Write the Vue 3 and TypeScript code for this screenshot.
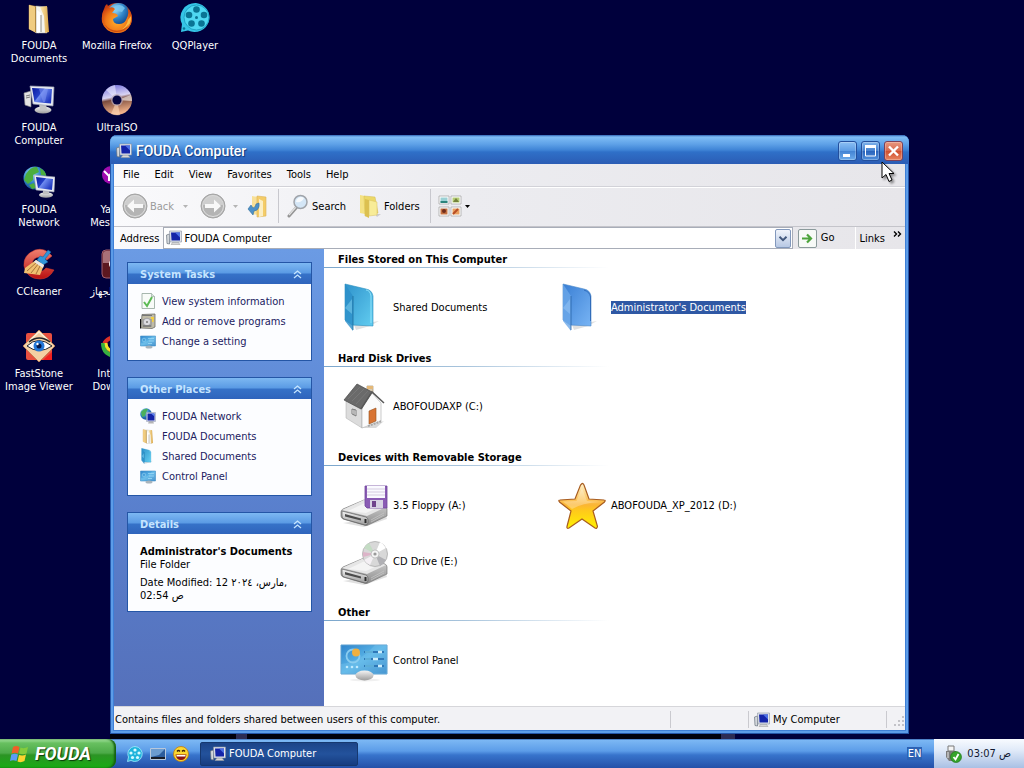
<script setup lang="ts">
import { ref } from 'vue'

interface DesktopItem { icon: string; lines: string[]; col: number; row: number }
interface LinkItem { icon: string; text: string }
interface DriveItem { icon: string; text: string; selected?: boolean }
interface Section { title: string; items: DriveItem[] }

const desktopItems: DesktopItem[] = [
  { icon: 'docs', lines: ['FOUDA', 'Documents'], col: 1, row: 1 },
  { icon: 'firefox', lines: ['Mozilla Firefox'], col: 2, row: 1 },
  { icon: 'reel', lines: ['QQPlayer'], col: 3, row: 1 },
  { icon: 'computer', lines: ['FOUDA', 'Computer'], col: 1, row: 2 },
  { icon: 'disc', lines: ['UltraISO'], col: 2, row: 2 },
  { icon: 'network', lines: ['FOUDA', 'Network'], col: 1, row: 3 },
  { icon: 'yahoo', lines: ['Yahoo!', 'Messenger'], col: 2, row: 3 },
  { icon: 'ccleaner', lines: ['CCleaner'], col: 1, row: 4 },
  { icon: 'device', lines: ['تعريف الجهاز'], col: 2, row: 4 },
  { icon: 'eye', lines: ['FastStone', 'Image Viewer'], col: 1, row: 5 },
  { icon: 'idm', lines: ['Internet', 'Download'], col: 2, row: 5 },
]

const menus: string[] = ['File', 'Edit', 'View', 'Favorites', 'Tools', 'Help']

const tasks: LinkItem[] = [
  { icon: 'sheet', text: 'View system information' },
  { icon: 'programs', text: 'Add or remove programs' },
  { icon: 'panelsmall', text: 'Change a setting' },
]

const places: LinkItem[] = [
  { icon: 'netsmall', text: 'FOUDA Network' },
  { icon: 'docs', text: 'FOUDA Documents' },
  { icon: 'shared', text: 'Shared Documents' },
  { icon: 'panelsmall', text: 'Control Panel' },
]

const sections: Section[] = [
  {
    title: 'Files Stored on This Computer',
    items: [
      { icon: 'shared', text: 'Shared Documents' },
      { icon: 'admin', text: "Administrator's Documents", selected: true },
    ],
  },
  { title: 'Hard Disk Drives', items: [{ icon: 'house', text: 'ABOFOUDAXP (C:)' }] },
  {
    title: 'Devices with Removable Storage',
    items: [
      { icon: 'floppy', text: '3.5 Floppy (A:)' },
      { icon: 'star', text: 'ABOFOUDA_XP_2012 (D:)' },
      { icon: 'cd', text: 'CD Drive (E:)' },
    ],
  },
  { title: 'Other', items: [{ icon: 'panel', text: 'Control Panel' }] },
]

const address = ref('FOUDA Computer')
</script>

<template>
  <div class="screen">
    <svg class="defs" aria-hidden="true">
      <defs>
        <linearGradient id="g-screen" x1="0" y1="0" x2="1" y2="0.6"><stop offset="0" stop-color="#0a1a9c" /><stop offset="0.45" stop-color="#2440c8" /><stop offset="0.5" stop-color="#6f8cf0" /><stop offset="1" stop-color="#2038c0" /></linearGradient>
        <linearGradient id="g-grey" x1="0" y1="0" x2="0" y2="1"><stop offset="0" stop-color="#f4f4f4" /><stop offset="1" stop-color="#9c9c9c" /></linearGradient>
        <linearGradient id="g-side" x1="0" y1="0" x2="0" y2="1"><stop offset="0" stop-color="#d8d8d8" /><stop offset="1" stop-color="#8c8c8c" /></linearGradient>
        <linearGradient id="g-manila" x1="0" y1="0" x2="1" y2="0"><stop offset="0" stop-color="#fbe9b4" /><stop offset="1" stop-color="#dda94a" /></linearGradient>
        <linearGradient id="g-cyan" x1="0" y1="0" x2="1" y2="1"><stop offset="0" stop-color="#2f93cc" /><stop offset="1" stop-color="#62cdf0" /></linearGradient>
        <linearGradient id="g-blue" x1="0" y1="0" x2="1" y2="1"><stop offset="0" stop-color="#3a7fd4" /><stop offset="1" stop-color="#78b4f4" /></linearGradient>
        <linearGradient id="g-star" x1="0" y1="0" x2="0" y2="1"><stop offset="0" stop-color="#fff3cf" /><stop offset="0.48" stop-color="#fbb534" /><stop offset="0.6" stop-color="#ffc81c" /><stop offset="1" stop-color="#fff200" /></linearGradient>
        <linearGradient id="g-panel" x1="0" y1="0" x2="1" y2="1"><stop offset="0" stop-color="#2f84cc" /><stop offset="0.5" stop-color="#5ab4e6" /><stop offset="1" stop-color="#2f80c4" /></linearGradient>
        <linearGradient id="g-disc" x1="0" y1="0" x2="0.2" y2="1"><stop offset="0" stop-color="#6a66d8" /><stop offset="0.45" stop-color="#d8d4f4" /><stop offset="0.55" stop-color="#7a4a3c" /><stop offset="1" stop-color="#f0b088" /></linearGradient>
        <radialGradient id="g-globe" cx="0.35" cy="0.3" r="0.8"><stop offset="0" stop-color="#9fe0f8" /><stop offset="0.5" stop-color="#2f84c8" /><stop offset="1" stop-color="#0c3a80" /></radialGradient>
        <radialGradient id="g-fox" cx="0.5" cy="0.6" r="0.6"><stop offset="0" stop-color="#ffb02c" /><stop offset="0.6" stop-color="#f07818" /><stop offset="1" stop-color="#c83c10" /></radialGradient>
        <linearGradient id="g-red" x1="0" y1="0" x2="0" y2="1"><stop offset="0" stop-color="#f08070" /><stop offset="1" stop-color="#b81010" /></linearGradient>
      </defs>

      <symbol id="i-docs" viewBox="0 0 32 32">
        <path d="M6 3 16 5V31L6 27Z" fill="url(#g-manila)" stroke="#b98a3c" stroke-width=".5" />
        <path d="M13 4 24 5V31L13 31Z" fill="#f4f4ee" stroke="#a8a8a0" stroke-width=".5" />
        <path d="M17 5 24 4 26 30 22 31 21 14Z" fill="url(#g-manila)" />
        <path d="M14 8 18 11V30L14 31Z" fill="#fff" /><path d="M18 13v17" stroke="#8c8c84" />
        <path d="M6 3 12 5 13 31 6 27Z" fill="#f0cc80" /><path d="M12.500 5v25" stroke="#a37a34" stroke-width=".8" />
      </symbol>

      <symbol id="i-firefox" viewBox="0 0 32 32">
        <circle cx="16" cy="16" r="15" fill="url(#g-fox)" />
        <circle cx="17.500" cy="12" r="11" fill="url(#g-globe)" />
        <path d="M14 4q6-3 10 2l-3 4-5-1-3 3z" fill="#7cc8f0" opacity=".8" />
        <path d="M3 7Q4 3 6 2L8 6Q12 4 14 7L11 11Q16 11 17 14L12 17Q12 22 18 22 23 22 25 18 29 11 26 6 33 13 30 22 25 32 15 31 4 30 1 20 0 12 3 7Z" fill="url(#g-fox)" />
        <path d="M30 14Q31 25 20 28 26 24 27 18Z" fill="#ffd050" opacity=".8" />
        <path d="M2 14Q2 23 9 27 20 32 28 22 24 31 14 30 3 28 2 14Z" fill="#c03c0c" opacity=".7" />
      </symbol>

      <symbol id="i-reel" viewBox="0 0 32 32">
        <path d="M17 1A15 14.500 0 1 1 9 28.500L2 30 3 22A15 14.500 0 0 1 17 1Z" fill="#35c4e6" />
        <circle cx="17.500" cy="15.500" r="12.500" fill="#4fd8f2" stroke="#1898bc" stroke-width=".8" />
        <g fill="#0a7494"><circle cx="17.500" cy="7.500" r="3.300" /><circle cx="25" cy="13" r="3.300" /><circle cx="22.500" cy="21.500" r="3.300" /><circle cx="12.500" cy="21.500" r="3.300" /><circle cx="10" cy="13" r="3.300" /><circle cx="17.500" cy="15.500" r="1.500" /><circle cx="5" cy="26.500" r="1.300" /></g>
      </symbol>

      <symbol id="i-computer" viewBox="0 0 32 32">
        <path d="M1 9 8 7V23L2 21Z" fill="#e4e4e4" stroke="#8c8c8c" stroke-width=".6" /><path d="M3 12l4-1M3 14l4-1" stroke="#777" />
        <ellipse cx="20" cy="26" rx="8.500" ry="3.500" fill="url(#g-grey)" /><path d="M16 20h7l1 6h-7z" fill="#c4c4c4" />
        <path d="M7 2 31 3 30 22 10 20Z" fill="#e8ebf2" stroke="#9a9fb0" stroke-width=".7" />
        <path d="M9 4 29 5 28 19.500 11.500 18Z" fill="url(#g-screen)" /><path d="M16 5 25 5 22 18 20 18Z" fill="#8298f4" opacity=".55" />
      </symbol>

      <symbol id="i-network" viewBox="0 0 32 32">
        <circle cx="12" cy="12" r="11.500" fill="url(#g-globe)" />
        <path d="M3 8Q8 0 14 1L16 6 10 9 10 14 5 18 1 14ZM17 2Q23 5 23 10L18 9ZM6 19 11 17 13 22 9 23Z" fill="#4cae3e" />
        <ellipse cx="23" cy="29" rx="7" ry="2.800" fill="url(#g-grey)" /><path d="M20 23h6v5h-6z" fill="#c0c0c0" />
        <path d="M11 9 32 11 31 26 13 24Z" fill="#e8ebf2" stroke="#9a9fb0" stroke-width=".6" /><path d="M13 11 30 13 29 24 15 22Z" fill="url(#g-screen)" />
      </symbol>

      <symbol id="i-netsmall" viewBox="0 0 16 16">
        <circle cx="6" cy="6" r="5.800" fill="url(#g-globe)" /><path d="M1 4Q4 0 8 1L6 5 5 8 2 9Z" fill="#4cb05c" />
        <path d="M9 13h4l1 2.500H8z" fill="#b4b4b4" /><path d="M6.500 4.500H15.500V13.500H6.500Z" fill="#dfe4f0" stroke="#8890a8" stroke-width=".5" /><path d="M7.500 5.500h7v7h-7z" fill="#1424a8" /><path d="M11 5.500h3.500v3z" fill="#5c84f0" />
      </symbol>

      <symbol id="i-disc" viewBox="0 0 32 32">
        <circle cx="16" cy="16" r="15" fill="url(#g-disc)" />
        <path d="M16 16 5 6A15 15 0 0 1 14 1Z" fill="#f0f0ff" opacity=".55" /><path d="M16 16 30 11A15 15 0 0 1 31 17Z" fill="#fff" opacity=".6" /><path d="M16 16 19 31A15 15 0 0 1 10 30Z" fill="#ffd8b8" opacity=".6" />
        <circle cx="16" cy="16" r="6" fill="#b9a8b8" opacity=".7" /><circle cx="16" cy="16" r="4.500" fill="#040440" />
      </symbol>

      <symbol id="i-yahoo" viewBox="0 0 32 32">
        <circle cx="10" cy="9" r="9" fill="#a00cb0" /><path d="M3 5l5 5v5m5-11-5 6" fill="none" stroke="#fff" stroke-width="2" /><circle cx="22" cy="22" r="8" fill="#f8d020" />
      </symbol>

      <symbol id="i-ccleaner" viewBox="0 0 32 32">
        <path d="M29 8Q22-1 12 2 0 7 1 18 4 31 17 31 26 31 31 22L23 20Q19 25 14 23 9 21 9 16 10 9 17 9L24 12Z" fill="url(#g-red)" stroke="#e04030" stroke-width=".5" />
        <path d="M25 2 28 4 22 11 25 14 20 17 14 12 17 8 20 9Z" fill="#2f94d8" stroke="#0d5c9c" stroke-width=".5" />
        <path d="M13 12 21 17 17 27 1 25 2 20Z" fill="#f0c070" /><path d="M14 14 4 23M16 15 8 25M18 16 13 26" stroke="#94602c" stroke-width=".8" /><path d="M13 12l8 5-1 3-9-6z" fill="#e8e8e8" />
      </symbol>

      <symbol id="i-device" viewBox="0 0 32 32">
        <rect x="1" y="2" width="30" height="28" rx="4" fill="#5c1820" stroke="#a06070" /><path d="M2 6q0-3 3-3h22q3 0 3 3v9H2z" fill="#a87078" /><circle cx="14" cy="16" r="6" fill="#fff" />
      </symbol>

      <symbol id="i-eye" viewBox="0 0 32 32">
        <rect x="3" y="3" width="26" height="27" rx="2" fill="#e85040" /><path d="M29 22V30H20Z" fill="#f02020" />
        <path d="M16 0 32 16 16 32 0 16Z" fill="#f4d0a4" stroke="#c08050" stroke-width=".8" /><path d="M7 10 16 2 25 10" fill="none" stroke="#fff0d8" stroke-width="1.500" />
        <path d="M4 16Q15 5 29 16 16 25 4 16Z" fill="#fff" stroke="#20242c" /><path d="M6 12Q16 4 27 12" fill="none" stroke="#20242c" stroke-width="1.300" />
        <circle cx="16" cy="16" r="5.500" fill="#2478d8" /><circle cx="16" cy="16" r="2.500" fill="#041848" /><circle cx="14.500" cy="14" r="1.200" fill="#fff" />
      </symbol>

      <symbol id="i-idm" viewBox="0 0 32 32">
        <ellipse cx="15" cy="16" rx="12" ry="9" fill="none" stroke="#dc3028" stroke-width="4" /><path d="M2 13q0 12 13 13" fill="none" stroke="#38b040" stroke-width="4" /><path d="M5 13q0 8 10 9" fill="none" stroke="#f4e428" stroke-width="3" />
      </symbol>

      <symbol id="i-sheet" viewBox="0 0 16 16">
        <path d="M2 .5H11.500L14.500 3.500V15.500H2Z" fill="#f8fbf8" stroke="#92a49a" stroke-width=".8" /><path d="M11.500.5V3.500H14.500" fill="#d8e4dc" stroke="#92a49a" stroke-width=".6" /><path d="M4 9 7 13 12 4" fill="none" stroke="#5cba54" stroke-width="2" />
      </symbol>

      <symbol id="i-programs" viewBox="0 0 16 16">
        <path d="M2 1.500 15 1V14L12 15.500 1 15Z" fill="#c0bca8" stroke="#6c6c68" stroke-width=".8" /><path d="M.5 6V15.500" stroke="#111" /><path d="M2 2.500 12 2.500" stroke="#777" /><path d="M11 4 14 4 13.500 9 11 9Z" fill="#f4d040" /><path d="M2 6h10v8H2z" fill="#a4a49c" /><circle cx="7" cy="9" r="3.800" fill="#dcdce0" stroke="#8c8c94" stroke-width=".7" /><circle cx="7" cy="9" r="1" fill="#777" /><path d="M3 13h8" stroke="#606060" />
      </symbol>

      <symbol id="i-panelsmall" viewBox="0 0 16 16">
        <path d="M.5 3H15.500V13H.5Z" fill="url(#g-panel)" stroke="#4a93c8" stroke-width=".6" /><path d="M8 5.500h6M9 8h5M8 10.500h4" stroke="#8cd0f4" stroke-width=".9" /><circle cx="4" cy="7" r="1.800" fill="none" stroke="#84c8ec" stroke-width=".8" /><path d="M1 10Q8 9 12 3.500H15V12.500H1Z" fill="#b4e4fa" opacity=".2" /><ellipse cx="9" cy="14" rx="3.500" ry="1.500" fill="#a8b4bc" />
      </symbol>

      <symbol id="i-panel" viewBox="0 0 48 48">
        <ellipse cx="25" cy="44" rx="15" ry="1.500" fill="#000" opacity=".06" />
        <path d="M1 9H47V38H1Z" fill="url(#g-panel)" stroke="#5a9fd0" /><path d="M1 28Q20 26 35 9H47V38H1Z" fill="#8ad0f4" opacity=".28" />
        <circle cx="13" cy="20" r="6.500" fill="none" stroke="#8acdf0" stroke-width="1.800" /><circle cx="16" cy="16.500" r="4" fill="#f0b040" />
        <path d="M24 16h20M24 23h20M24 30h20" stroke="#2f78b8" stroke-width="2" /><path d="M38 16h4M33 23h5M38 30h4" stroke="#cceefc" stroke-width="2.500" /><path d="M25 16h8M25 23h6M25 30h9" stroke="#8ce4f8" />
        <g fill="#bfeaff"><circle cx="7" cy="31" r="1.300" /><circle cx="12" cy="31" r="1.300" /><circle cx="17" cy="31" r="1.300" /></g>
        <ellipse cx="24.500" cy="39.500" rx="9" ry="5" fill="url(#g-grey)" />
      </symbol>

      <symbol id="i-shared" viewBox="0 0 48 48">
        <path d="M14 42 39 38 30 43 16 47Z" fill="#000" opacity=".12" /><path d="M5 1 26 6Q32 7 33 13V43L12 42 5 37Z" fill="url(#g-cyan)" stroke="#2a8fbe" stroke-width=".6" /><path d="M5 1 13 13V48L5 38Z" fill="#2c8fc8" opacity=".8" /><path d="M13 13V47" stroke="#1c6c9c" stroke-width=".8" /><path d="M5 25 12 31V16Z" fill="#9ce4fa" opacity=".4" /><path d="M26 7Q30 7 31 13V40" fill="none" stroke="#a0ecff" stroke-width=".8" />
      </symbol>

      <symbol id="i-admin" viewBox="0 0 48 48">
        <path d="M14 42 39 38 30 43 16 47Z" fill="#000" opacity=".12" /><path d="M5 1 26 6Q32 7 33 13V43L12 42 5 37Z" fill="url(#g-blue)" stroke="#4c88c8" stroke-width=".6" /><path d="M5 1 13 13V48L5 38Z" fill="#6ca8e8" opacity=".8" /><path d="M13 13V47" stroke="#2a64a8" stroke-width=".8" /><path d="M5 25 12 31V16Z" fill="#a8d0fa" opacity=".4" /><path d="M26 7Q32 9 32.500 14V38" fill="none" stroke="#2460b0" stroke-width=".8" />
      </symbol>

      <symbol id="i-house" viewBox="0 0 48 48">
        <path d="M22 46 44 39 36 46Z" fill="#000" opacity=".15" />
        <path d="M27 4h6v9l-6-3z" fill="#d8cbb4" stroke="#948468" stroke-width=".6" /><path d="M27 4h6v3h-6z" fill="#e4b878" />
        <path d="M6 19 22 24V46L6 36Z" fill="#dcdcdc" stroke="#aaa" stroke-width=".5" /><path d="M22 24 32 11 41 21V39L22 46Z" fill="#fbfbfb" stroke="#aaa" stroke-width=".6" />
        <path d="M17 2 32 10 21 27 4 18Z" fill="#6a6a6a" stroke="#484848" stroke-width=".7" /><path d="M21 27 32 10 44 21" fill="none" stroke="#585858" stroke-width="1.500" /><path d="M8 17 20 5M12 19 24 7M16 22 28 9" stroke="#808080" stroke-width=".6" />
        <path d="M29 29 36 26V39L29 42Z" fill="#d87434" stroke="#94501c" stroke-width=".6" /><path d="M12 27 16 28V34L12 32ZM14 27.500V33" fill="#eee" stroke="#666" stroke-width=".8" /><path d="M28 44 42 39" stroke="#a8a8a8" stroke-width="2" stroke-dasharray="2 1" />
      </symbol>

      <symbol id="i-drive" viewBox="0 0 48 48">
        <path d="M3 42 24 46 47 38 46 35Z" fill="#000" opacity=".12" />
        <path d="M1 31Q1 29 3 28L24 19 45 25Q47 26 47 28V35L28 44Q26 45 24 44L3 38Q1 37 1 35Z" fill="url(#g-side)" stroke="#787878" stroke-width=".7" />
        <path d="M2 29 24 19 46 26 27 35Z" fill="#e6e6e6" />
        <path d="M8 30 25 22 39 26 26 32Z" fill="#f4f4f4" />
        <path d="M2 30 26 36Q28 37 28 39V42Q28 44 25 44L4 38Q2 37 2 35Z" fill="url(#g-grey)" stroke="#606060" stroke-width=".7" />
        <path d="M5 33 21 37.500V39.500L5 35.500Z" fill="#4c4c4c" /><path d="M25.500 38v4" stroke="#2c2c2c" stroke-width="2" /><path d="M31 39 44 32M31 41 44 34" stroke="#c4c4c4" stroke-width=".8" />
      </symbol>
      <symbol id="i-floppy" viewBox="0 0 48 48">
        <use href="#i-drive" /><path d="M25 5H47V27H27L25 25Z" fill="#8a5cb4" stroke="#70449c" stroke-width=".8" /><path d="M27 5H45V17H27Z" fill="#fafaff" /><path d="M27 8h18M27 11h18M27 14h18" stroke="#ccc0d8" stroke-width=".8" /><path d="M30 19H43V27H30Z" fill="#d8d4e4" /><path d="M32 20h4v6h-4z" fill="#70448c" />
      </symbol>
      <symbol id="i-cd" viewBox="0 0 48 48">
        <use href="#i-drive" y="2" /><circle cx="35" cy="17" r="12.500" fill="#d8d8d8" stroke="#a4a4a4" stroke-width=".7" /><path d="M35 17 24 11A13 13 0 0 1 29 6Z" fill="#c4dcc4" /><path d="M35 17 40 5A13 13 0 0 1 46 11Z" fill="#fff" /><path d="M35 17 46 23A13 13 0 0 1 40 29Z" fill="#b0b0b4" /><path d="M35 17 24 23A13 13 0 0 0 30 28Z" fill="#f4f0f4" /><path d="M35 17 23 15V20Z" fill="#dcb4c8" /><circle cx="35" cy="17" r="4" fill="#f4f4f4" stroke="#aaa" stroke-width=".6" /><circle cx="35" cy="17" r="1.600" fill="#999" />
      </symbol>
      <symbol id="i-star" viewBox="0 0 48 48">
        <path d="M24 2.500Q25 2 26 4L31 18 46 19Q48 19 46.500 21L35 30 39.500 45.500Q39 48 37 47L24 38 11 47Q8.500 48 9 45.500L13 30 1.500 21Q0 19 2 19L17 18 22.500 4Z" fill="url(#g-star)" stroke="#a85c20" stroke-width="1.200" /><path d="M5 20.500 18.500 20 24 7 29 20 42 21Q24 22 14 28Z" fill="#fff" opacity=".28" />
      </symbol>

      <symbol id="i-mini" viewBox="0 0 16 16">
        <path d="M.5 5 3.500 4V14L1 13.500Z" fill="#d4d8dc" stroke="#69737e" stroke-width=".7" /><path d="M7 12h5l2 2.500H5z" fill="#d8d8d8" stroke="#999" stroke-width=".5" /><path d="M3.500 1 15.500 1V12L4 12Z" fill="#e0e4ec" stroke="#8890a0" stroke-width=".6" /><path d="M5 2.500 14 2.500V10.500H5.500Z" fill="#1424a8" /><path d="M9 2.500h5v5z" fill="#4c70e4" />
      </symbol>
    </svg>

    <main class="desktop">
      <div class="icons">
        <button v-for="d in desktopItems" :key="d.lines[0] + d.row" class="shortcut" :class="['c' + d.col, 'r' + d.row]">
          <svg class="i32"><use :href="'#i-' + d.icon" /></svg>
          <span v-for="l in d.lines" :key="l" class="line">{{ l }}</span>
        </button>
      </div>
      <div class="dock"></div>

      <section class="window" aria-label="FOUDA Computer">
        <header class="titlebar">
          <svg class="i16"><use href="#i-mini" /></svg>
          <h1>FOUDA Computer</h1>
          <button class="wbtn min" aria-label="Minimize"><svg viewBox="0 0 19 20"><path d="M5 14.500h7" stroke="#fff" stroke-width="3" /></svg></button>
          <button class="wbtn" aria-label="Maximize"><svg viewBox="0 0 19 20"><path d="M4.500 5h10v10h-10z" fill="none" stroke="#fff" /><path d="M4 5.500h11" stroke="#fff" stroke-width="3" /></svg></button>
          <button class="wbtn close" aria-label="Close"><svg viewBox="0 0 19 20"><path d="M5 5.500 14 14.500M14 5.500 5 14.500" stroke="#fff" stroke-width="2.400" /></svg></button>
        </header>

        <nav class="menubar"><button v-for="m in menus" :key="m">{{ m }}</button></nav>

        <div class="toolbar">
          <button class="tool dim" disabled>
            <svg class="i26" viewBox="0 0 26 26"><circle cx="13" cy="13" r="12" fill="#b4b4b4" stroke="#a4a4a4" /><circle cx="13" cy="13" r="10.500" fill="none" stroke="#dedede" /><path d="M3 12a10 10 0 0 1 20 0z" fill="#d4d4d4" opacity=".8" /><path d="M5 13 12 6.500V11H21V15H12V19.500Z" fill="#f8f8f8" /></svg>
            Back
          </button>
          <svg class="caret dim" viewBox="0 0 5 3"><path d="M0 0H5L2.500 3Z" /></svg>
          <button class="tool fwd" disabled aria-label="Forward">
            <svg class="i26" viewBox="0 0 26 26"><circle cx="13" cy="13" r="12" fill="#b4b4b4" stroke="#a4a4a4" /><circle cx="13" cy="13" r="10.500" fill="none" stroke="#dedede" /><path d="M3 12a10 10 0 0 1 20 0z" fill="#d4d4d4" opacity=".8" /><path d="M21 13 14 6.500V11H5V15H14V19.500Z" fill="#f8f8f8" /></svg>
          </button>
          <svg class="caret dim near" viewBox="0 0 5 3"><path d="M0 0H5L2.500 3Z" /></svg>
          <button class="tool up" aria-label="Up">
            <svg class="i24" viewBox="0 0 24 24"><path d="M6 2 12 3V21L6 20Z" fill="#f8e098" /><path d="M11 2 20 3V22L11 23Z" fill="#f4cc68" stroke="#dcb458" stroke-width=".6" /><path d="M13 5 17 7V22L13 23Z" fill="#fbeec4" /><path d="M2 15 7 21 8 17Q14 16 13 9L10 10Q10 13 7 14L5 11Z" fill="#4c90c8" stroke="#34709c" stroke-width=".6" /></svg>
          </button>
          <span class="sep"></span>
          <button class="tool">
            <svg class="i24" viewBox="0 0 24 24"><path d="M3 22 10 14" stroke="#949494" stroke-width="3" stroke-linecap="round" /><path d="M3 21 10 13" stroke="#e4e4e4" stroke-width="1.200" /><circle cx="14.500" cy="8" r="6.500" fill="#d4e6f6" stroke="#a0a4aa" stroke-width="1.500" /><path d="M10 8a5 5 0 0 1 8-4q-2 5-8 4z" fill="#fff" opacity=".8" /></svg>
            Search
          </button>
          <button class="tool folders">
            <svg class="i24" viewBox="0 0 24 24"><path d="M17 20h6l-4 3z" fill="#000" opacity=".15" /><path d="M2 1 7 2V20L2 19Z" fill="#f4e284" /><path d="M6 2 17 3 20 19 7 22Z" fill="#ecd868" stroke="#d4bc50" stroke-width=".5" /><path d="M7 5 11 6V24L7 22Z" fill="#dcc050" /><path d="M11 6 19 8V21L11 22Z" fill="#f8ec98" stroke="#d8c060" stroke-width=".5" /></svg>
            Folders
          </button>
          <span class="sep"></span>
          <button class="tool views" aria-label="Views">
            <svg class="i24" viewBox="0 0 24 24"><g fill="#fff" stroke="#aaa" stroke-width=".8"><path d="M1 2h10v8H1zM13 2h10v8H13zM1 13h10v9H1zM13 13h10v9H13z" /></g><path d="M2.500 3.500h7v5h-7z" fill="#9ad0d4" /><path d="M2.500 7h7v2h-7z" fill="#2c847c" /><path d="M14.500 3.500h7v5h-7z" fill="#b4cc74" /><path d="M15 8 18 4 21 8Z" fill="#74823c" /><path d="M2.500 14.500h7v6h-7z" fill="#c47040" /><circle cx="6" cy="17" r="2" fill="#702c1c" /><path d="M14.500 14.500h7v6h-7z" fill="#e8a060" /><path d="M15 20 20 15" stroke="#b84c24" stroke-width="2" /></svg>
            <svg class="caret" viewBox="0 0 5 3"><path d="M0 0H5L2.500 3Z" /></svg>
          </button>
        </div>

        <div class="addressbar">
          <label for="addr">Address</label>
          <div class="field">
            <svg class="i16"><use href="#i-mini" /></svg>
            <input id="addr" v-model="address" type="text" />
            <button class="drop" aria-label="Show addresses"><svg viewBox="0 0 16 18"><path d="M4 7 8 11 12 7" fill="none" stroke="#41577c" stroke-width="2.200" /></svg></button>
          </div>
          <button class="go"><svg viewBox="0 0 19 19"><rect x=".5" y=".5" width="18" height="18" rx="1.500" fill="#f7faf7" stroke="#8b9a9b" /><path d="M4 9.500H13M9 5.500 13 9.500 9 13.500" fill="none" stroke="#4ca43c" stroke-width="2.200" /></svg>Go</button>
          <div class="links">Links<svg viewBox="0 0 9 6"><path d="M1 .5 3.500 3 1 5.500M5 .5 7.500 3 5 5.500" fill="none" stroke="#000" stroke-width="1.400" /></svg></div>
        </div>

        <div class="body">
          <aside class="side">
            <section class="card">
              <h2>System Tasks<svg viewBox="0 0 9 9"><path d="M1 4 4.500 1 8 4M1 8 4.500 5 8 8" /></svg></h2>
              <div class="cardbody">
                <a v-for="t in tasks" :key="t.text" href="#"><svg class="i16"><use :href="'#i-' + t.icon" /></svg>{{ t.text }}</a>
              </div>
            </section>
            <section class="card">
              <h2>Other Places<svg viewBox="0 0 9 9"><path d="M1 4 4.500 1 8 4M1 8 4.500 5 8 8" /></svg></h2>
              <div class="cardbody">
                <a v-for="p in places" :key="p.text" href="#"><svg class="i16"><use :href="'#i-' + p.icon" /></svg>{{ p.text }}</a>
              </div>
            </section>
            <section class="card">
              <h2>Details<svg viewBox="0 0 9 9"><path d="M1 4 4.500 1 8 4M1 8 4.500 5 8 8" /></svg></h2>
              <div class="cardbody details">
                <p><strong>Administrator's Documents</strong><br />File Folder</p>
                <p>Date Modified: 12 مارس، ٢٠٢٤,<br />02:54 ص</p>
              </div>
            </section>
          </aside>
          <div class="files">
            <section v-for="s in sections" :key="s.title">
              <h3>{{ s.title }}</h3>
              <div class="grid">
                <button v-for="i in s.items" :key="i.text" class="item" :class="{ selected: i.selected }">
                  <svg class="i48"><use :href="'#i-' + i.icon" /></svg><span>{{ i.text }}</span>
                </button>
              </div>
            </section>
          </div>
        </div>

        <footer class="status">
          <span class="msg">Contains files and folders shared between users of this computer.</span>
          <span class="cell blank"></span>
          <span class="cell place"><svg class="i16"><use href="#i-mini" /></svg>My Computer</span>
          <span class="cell grip"><svg viewBox="0 0 12 12"><path d="M9 0h2v2H9zM9 4h2v2H9zM9 8h2v2H9zM5 4h2v2H5zM5 8h2v2H5zM1 8h2v2H1z" fill="#c3c3c8" /></svg></span>
        </footer>
      </section>

      <svg class="cursor" viewBox="0 0 14 22"><path d="M1 1V17L5 13.500 8 20.500 11 19 8 12.500H13Z" fill="#fff" stroke="#000" /></svg>
    </main>

    <footer class="taskbar">
      <button class="start">
        <svg viewBox="0 0 20 18"><path d="M3 2Q6 0 9.500 2L8 8.500Q5 7 1.500 8.500Z" fill="#f06028" /><path d="M10.500 2.500Q14 4 18 2L16.500 8.500Q13 10 9 8.500Z" fill="#84cc3c" /><path d="M1.300 9.500Q5 8 8 9.500L6.500 16Q3 14.500 0 16Z" fill="#5c9cf4" /><path d="M9 10Q13 11 16 9.500L14.500 16Q11 18 7.500 16.500Z" fill="#fcd430" /></svg>
        FOUDA
      </button>
      <div class="quick">
        <button aria-label="QQPlayer"><svg class="i16" viewBox="0 0 16 16"><path d="M8 .5A7.500 7.500 0 1 1 4 14.500L.5 15.500 1.500 11A7.500 7.500 0 0 1 8 .5Z" fill="#20b4dc" stroke="#a4ecfc" stroke-width=".8" /><g fill="#d8faff"><circle cx="8" cy="4" r="1.600" /><circle cx="12" cy="7" r="1.600" /><circle cx="10.500" cy="11.500" r="1.600" /><circle cx="5.500" cy="11.500" r="1.600" /><circle cx="4" cy="7" r="1.600" /><circle cx="8" cy="8" r=".8" /></g></svg></button>
        <button aria-label="Show desktop"><svg class="i16" viewBox="0 0 16 16"><path d="M.5 2.500h15v11H.5z" fill="#2c5c9c" stroke="#b8c8dc" /><path d="M1 3h14l-6 6-8 2z" fill="#6c9cd0" /><path d="M1 12h14" stroke="#181c28" stroke-width="2" /></svg></button>
        <button aria-label="Messenger"><svg class="i16" viewBox="0 0 16 16"><circle cx="8" cy="8" r="7.500" fill="#fcd830" stroke="#c07810" stroke-width=".8" /><path d="M2.500 8.500h11Q12.500 14 8 14T2.500 8.500Z" fill="#8c1414" /><path d="M3.500 9h9v1.500h-9z" fill="#fff" /><path d="M4 5.500q1.500-2 3 0M9 5.500q1.500-2 3 0" fill="none" stroke="#3c2008" stroke-width="1.300" /></svg></button>
      </div>
      <button class="task"><svg class="i16"><use href="#i-mini" /></svg>FOUDA Computer</button>
      <span class="lang">EN</span>
      <div class="tray">
        <svg class="i18" viewBox="0 0 18 18"><path d="M4 1h6v5H4z" fill="#f4f4f4" stroke="#787878" /><path d="M2 6h10v6l-3 4H5l-3-4z" fill="#7c7c7c" /><path d="M4 7v6" stroke="#b4b4b4" stroke-width="2" /><circle cx="12" cy="12" r="5.500" fill="#36a42c" stroke="#187010" stroke-width=".6" /><path d="M9.500 12 11.500 14.500 14.500 9" fill="none" stroke="#fff" stroke-width="1.800" /></svg>
        <time>03:07 ص</time>
      </div>
    </footer>
  </div>
</template>

<style>
html, body { background: #00003c; }
</style>

<style scoped>
* { box-sizing: border-box; }
.screen { display: flex; flex-direction: column; height: 100vh; min-height: 600px; overflow: hidden; font: 11px/13px "DejaVu Sans Condensed", "DejaVu Sans", sans-serif; color: #000; background: #00003c; }
button { font: inherit; color: inherit; background: none; border: 0; padding: 0; margin: 0; text-align: left; }
svg { flex: none; display: block; }
.defs { position: absolute; width: 0; height: 0; }
.i16 { width: 16px; height: 16px; }
.i18 { width: 18px; height: 18px; }
.i24 { width: 24px; height: 24px; }
.i26 { width: 26px; height: 26px; }
.i32 { width: 32px; height: 32px; margin-bottom: 5px; }
.i48 { width: 48px; height: 48px; }

.desktop { position: relative; flex: 1; }
.icons { display: grid; grid-template-columns: repeat(3, 78px); grid-auto-rows: 82px; }
.shortcut { display: flex; flex-direction: column; align-items: center; padding-top: 2px; color: #fff; }
.line { white-space: nowrap; }
.c1 { grid-column: 1; } .c2 { grid-column: 2; } .c3 { grid-column: 3; }
.r1 { grid-row: 1; } .r2 { grid-row: 2; } .r3 { grid-row: 3; } .r4 { grid-row: 4; } .r5 { grid-row: 5; }
.dock { position: absolute; left: 110px; right: 289px; bottom: 0; height: 6px; background: linear-gradient(90deg, #00000c 126px, #2c2c54 126px, #2c2c54 137px, #00000c 137px, #00000c calc(100% - 14px), #2c2c54 calc(100% - 14px)); }

.window { position: absolute; left: 110px; right: 115px; top: 135px; bottom: 5px; display: flex; flex-direction: column; padding: 0 4px 4px; border-radius: 7px 7px 0 0; background: #3f7fd6; box-shadow: inset 0 0 0 1px #2455a8, inset 0 0 0 3px #5c9ce8; }
.titlebar { display: flex; align-items: center; gap: 4px; height: 29px; margin: 0 -4px; padding: 2px 6px 0; border-radius: 7px 7px 0 0; background: linear-gradient(#2f62b4 0, #7fbdf5 2px, #5fa2e8 9px, #3f84d6 15px, #2f70c8 17px, #2b5cb4 29px); }
h1 { flex: 1; margin: 0; font: 500 14px/18px Roboto, "Open Sans", sans-serif; color: #fff; text-shadow: 1px 1px 1px #123a80; }
.wbtn { width: 19px; height: 20px; border: 1px solid #234f9c; border-radius: 3px; background: linear-gradient(#7fb4ec, #4380d0 50%, #2a64bc 52%, #5090dc); box-shadow: inset 0 0 0 1px #ffffff40; }
.wbtn svg { width: 19px; height: 20px; margin: -1px; }
.min { background: linear-gradient(#8cc0f4, #5c9ce4 50%, #4484d4 52%, #6cacec); }
.close { background: linear-gradient(#e89880, #d8684c 50%, #d05030 52%, #e88460); border-color: #7c4058; }

.menubar { display: flex; gap: 15px; height: 23px; padding: 0 9px 2px; background: linear-gradient(90deg, #fafafc, #ececf0 45%, #e7e6ea); border-bottom: 1px solid #d2d2d8; }
.toolbar { display: flex; align-items: center; height: 40px; padding: 0 8px 2px; background: linear-gradient(90deg, #fafafc, #ececf0 45%, #e7e6ea); border-top: 1px solid #fff; border-bottom: 1px solid #c4c4ca; }
.tool { display: flex; align-items: center; gap: 2px; }
.dim { color: #9b9b9b; }
.caret { width: 5px; height: 3px; margin-left: 9px; }
.caret.dim { fill: #b4b4b4; }
.fwd { margin-left: 12px; }
.near { margin-left: 7px; }
.up { margin-left: 8px; }
.sep { width: 1px; height: 34px; margin: 0 7px 0 8px; background: #c8c8ce; }
.folders { margin-left: 12px; }
.folders + .sep { margin-left: 10px; }
.views .caret { margin-left: 1px; }

.addressbar { display: flex; align-items: stretch; height: 22px; padding-left: 6px; background: linear-gradient(90deg, #fafafc, #ececf0 45%, #e7e6ea); line-height: 24px; }
.field { flex: 1; display: flex; align-items: center; gap: 2px; margin-left: 4px; padding: 0 1px 0 2px; border: 1px solid #a8adb8; background: #fff; }
.field input { flex: 1; min-width: 0; border: 0; padding: 2px 0 0; font: inherit; background: none; outline: 0; }
.drop { width: 16px; height: 19px; border: 1px solid #8298bc; border-radius: 2px; background: linear-gradient(#f0f4fb, #b7c8e4); }
.drop svg { width: 14px; height: 17px; }
.go { display: flex; align-items: center; gap: 4px; padding: 0 20px 0 5px; line-height: 20px; }
.go svg { width: 19px; height: 19px; }
.links { display: flex; gap: 8px; padding: 0 3px 0 4px; border-left: 1px solid #fff; }
.links svg { width: 9px; height: 6px; margin-top: 4px; }

.body { flex: 1; min-height: 0; display: flex; }
.side { width: 210px; padding: 13px 12px 0 13px; background: linear-gradient(#6b9be4, #5a82d0 50%, #5570ba); display: flex; flex-direction: column; gap: 16px; }
.card { border: 1px solid #2456a6; background: #fcfdff; }
h2 { display: flex; justify-content: space-between; align-items: center; height: 21px; margin: 0; padding: 1px 9px 0 12px; font-size: 11px; line-height: 13px; color: #c4e4ff; background: linear-gradient(#7db8f2, #5a9ae4 48%, #3672c8 52%, #2f64bc); }
h2 svg { width: 9px; height: 9px; fill: none; stroke: #c4e4ff; stroke-width: 1.3; }
.cardbody { padding: 7px 12px 9px; }
.cardbody a { display: flex; align-items: center; gap: 6px; height: 20px; color: #21215f; text-decoration: none; white-space: nowrap; }
.details { padding: 11px 12px 9px; }
.details p { margin: 0; white-space: nowrap; }
.details p + p { margin-top: 5px; }

.files { flex: 1; background: #fff; overflow: hidden; }
h3 { height: 19px; margin: 0; padding: 4px 14px 0; font-size: 11px; line-height: 13px; background: linear-gradient(90deg, #7ba6cc, #a8c4dc 140px, #fff 285px) bottom / 100% 1px no-repeat; }
.grid { display: grid; grid-template-columns: repeat(auto-fill, 218px); grid-auto-rows: 56px; padding: 11px 16px 13px; }
.item { display: flex; align-items: center; gap: 5px; white-space: nowrap; }
.selected span { background: #2f58a4; color: #fff; }

.status { display: flex; align-items: center; height: 24px; padding-top: 2px; background: #f2f2f5; border-top: 1px solid #d6d6da; }
.msg { flex: 1; padding-left: 1px; }
.cell { display: flex; align-items: center; height: 17px; border-left: 1px solid #cacacf; }
.blank { width: 78px; }
.place { width: 138px; gap: 3px; padding-left: 5px; }
.grip { width: 19px; padding-left: 6px; }
.grip svg { width: 12px; height: 12px; margin-top: 5px; }
.cursor { position: absolute; right: 129px; top: 161px; width: 14px; height: 22px; filter: drop-shadow(2px 2px 1px #0006); }

.taskbar { position: relative; display: flex; align-items: center; height: 29px; background: linear-gradient(#1f4c9c 0, #7cb8f4 1px, #5c9ce8 12px, #3874cc 16px, #2450a8 29px); color: #fff; }
.start { display: flex; align-items: center; gap: 5px; width: 116px; height: 29px; padding-left: 10px; border-radius: 0 8px 8px 0; font: italic 700 18px/20px Roboto, "Open Sans", sans-serif; text-shadow: 1px 1px 1px #0a3a0a; background: linear-gradient(#a8e4a4 0, #68c060 4px, #4caa48 14px, #2c9424 16px, #18ac14 29px); box-shadow: inset -2px 0 2px #146010; }
.start svg { width: 20px; height: 18px; }
.quick { display: flex; gap: 7px; padding: 0 11px 0 11px; }
.task { display: flex; align-items: center; gap: 3px; width: 158px; height: 24px; padding-left: 9px; border: 1px solid #16386f; border-radius: 2px; background: linear-gradient(#1c4488, #23529c 50%, #163c80); }
.lang { margin-left: auto; padding: 0 1px; background: #2c62b4; }
.tray { display: flex; align-items: center; gap: 5px; height: 29px; margin-left: 12px; padding: 0 13px 0 10px; color: #101830; background: linear-gradient(#f8fbff, #dfe9f8 40%, #a9c0e4); }
</style>
